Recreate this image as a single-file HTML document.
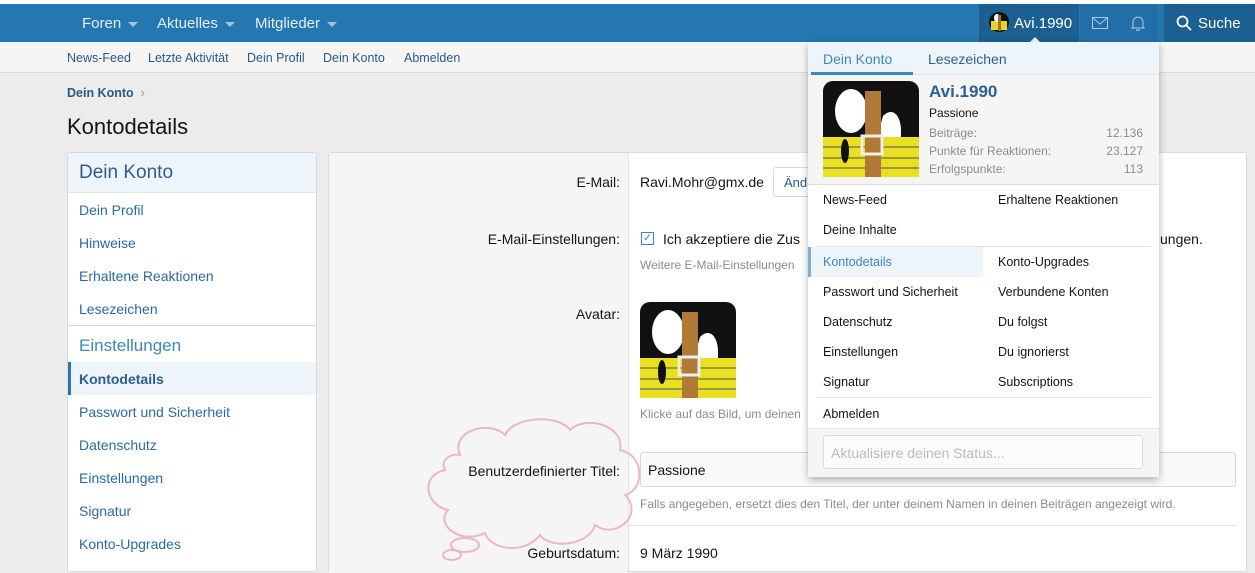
<!DOCTYPE html>
<html><head><meta charset="utf-8">
<style>
*{box-sizing:border-box;margin:0;padding:0}
body{width:1255px;height:561px;overflow:hidden;background:#ececec;font-family:"Liberation Sans","DejaVu Sans",sans-serif;position:relative;color:#141414}
.abs{position:absolute}
.top{left:0;top:4px;width:1255px;height:38px;background:#2577b1}
.topw{left:0;top:0;width:1255px;height:4px;background:#fff}
.nav{color:#e4effa;font-size:15px;top:15px}
.car{display:inline-block;width:0;height:0;border-left:5px solid transparent;border-right:5px solid transparent;border-top:5px solid #9cc3e6;margin-left:7px;vertical-align:middle}
.sub{left:0;top:42px;width:1255px;height:31px;background:#f5f5f5;border-bottom:1px solid #d8d8d8}
.sub span{position:absolute;top:9px;font-size:12.5px;color:#2a5a88}
.side{left:67px;top:152px;width:250px;height:420px;background:#fff;border:1px solid #dadada;border-radius:3px}
.side div{position:absolute;left:11px;font-size:14px;color:#2b6aa0}
.main{left:328px;top:152px;width:919px;height:420px;background:#fff;border:1px solid #dadada;border-radius:3px}
.lab{background:#f5f5f5}
.lbl{font-size:14px;color:#141414;text-align:right;width:300px;left:320px}
.hint{font-size:12px;color:#8c8c8c}
.dd{left:808px;top:42px;width:351px;height:435px;background:#fff;box-shadow:0 3px 8px rgba(0,0,0,.3);border-radius:0 0 3px 3px}
.mi{position:absolute;font-size:12.5px;color:#141414}
</style></head><body>
<div class="abs topw"></div>
<div class="abs top"></div>
<div class="abs nav" style="left:82px">Foren<span class="car"></span></div>
<div class="abs nav" style="left:157px">Aktuelles<span class="car"></span></div>
<div class="abs nav" style="left:255px">Mitglieder<span class="car"></span></div>
<div class="abs" style="left:979px;top:4px;width:100px;height:38px;background:#1c5f91"></div>
<div class="abs" style="left:1080px;top:4px;width:78px;height:38px;background:#226ea6"></div>
<div class="abs" style="left:1164px;top:4px;width:91px;height:38px;background:#1c5f91"></div>
<svg class="abs" style="left:989px;top:12px" width="20" height="20" viewBox="0 0 20 20"><circle cx="10" cy="10" r="10" fill="#111"/><rect x="2" y="9" width="16" height="9" fill="#e8d626"/><ellipse cx="8" cy="6" rx="3" ry="4" fill="#fff"/><rect x="9" y="3" width="3" height="16" fill="#a6702e"/></svg>
<div class="abs nav" style="left:1014px;color:#fff">Avi.1990</div>
<svg class="abs" style="left:1092px;top:17px" width="16" height="12" viewBox="0 0 16 12"><rect x="0.5" y="0.5" width="15" height="11" fill="none" stroke="#a9cbe8"/><path d="M1 1l7 6 7-6" fill="none" stroke="#a9cbe8"/></svg>
<svg class="abs" style="left:1131px;top:15px" width="14" height="16" viewBox="0 0 14 16"><path d="M2 12V7a5 5 0 0110 0v5l1 1H1z M5.5 14a1.5 1.5 0 003 0" fill="none" stroke="#a9cbe8"/></svg>
<svg class="abs" style="left:1176px;top:15px" width="16" height="16" viewBox="0 0 16 16"><circle cx="6.5" cy="6.5" r="5" fill="none" stroke="#fff" stroke-width="1.8"/><path d="M10 10l5 5" stroke="#fff" stroke-width="1.8"/></svg>
<div class="abs nav" style="left:1198px;color:#fff">Suche</div>
<div class="abs" style="left:1030px;top:37px;width:0;height:0;border-left:5px solid transparent;border-right:5px solid transparent;border-bottom:5px solid #edf4fa"></div>

<div class="abs sub"><span style="left:67px">News-Feed</span><span style="left:148px">Letzte Aktivität</span><span style="left:247px">Dein Profil</span><span style="left:323px">Dein Konto</span><span style="left:404px">Abmelden</span></div>
<div class="abs" style="left:67px;top:86px;font-size:12.5px;font-weight:bold;color:#2a5a88">Dein Konto <span style="color:#999;font-weight:normal">&nbsp;›</span></div>
<div class="abs" style="left:67px;top:114px;font-size:22px;color:#141414">Kontodetails</div>

<div class="abs side">
<div style="left:0;top:0;width:248px;height:40px;background:#edf4fa;border-bottom:1px solid #dde5ec"></div>
<div style="top:9px;font-size:19px;color:#2f5f8d">Dein Konto</div>
<div style="top:49px">Dein Profil</div>
<div style="top:82px">Hinweise</div>
<div style="top:115px">Erhaltene Reaktionen</div>
<div style="top:148px">Lesezeichen</div>
<div style="left:0;top:172px;width:248px;height:1px;background:#dadada"></div>
<div style="top:183px;font-size:17px;color:#3a8ab8">Einstellungen</div>
<div style="left:0;top:209px;width:248px;height:33px;background:#edf4fa;border-left:3px solid #2577b1"></div>
<div style="top:218px;font-weight:bold;color:#2f5f8d">Kontodetails</div>
<div style="top:251px">Passwort und Sicherheit</div>
<div style="top:284px">Datenschutz</div>
<div style="top:317px">Einstellungen</div>
<div style="top:350px">Signatur</div>
<div style="top:383px">Konto-Upgrades</div>
</div>

<div class="abs main"><div class="abs lab" style="left:0;top:0;width:300px;height:420px;border-right:1px solid #e3e3e3"></div></div>
<div class="abs lbl" style="top:174px">E-Mail:</div>
<div class="abs" style="left:640px;top:174px;font-size:14px">Ravi.Mohr@gmx.de</div>
<div class="abs" style="left:773px;top:167px;width:50px;height:30px;border:1px solid #d8d8d8;border-radius:3px;font-size:13px;color:#2a5a88;padding:7px 10px">Änd</div>
<div class="abs lbl" style="top:231px">E-Mail-Einstellungen:</div>
<div class="abs" style="left:641px;top:232px;width:13px;height:13px;border:1px solid #3a8ab8;color:#3a8ab8;font-size:11px;line-height:11px;text-align:center">✓</div>
<div class="abs" style="left:663px;top:231px;font-size:14px">Ich akzeptiere die Zus</div>
<div class="abs" style="left:1160px;top:231px;font-size:14px">ungen.</div>
<div class="abs hint" style="left:640px;top:258px">Weitere E-Mail-Einstellungen</div>
<div class="abs lbl" style="top:306px">Avatar:</div>
<svg class="abs" style="left:640px;top:302px" width="96" height="96" viewBox="0 0 96 96"><rect width="96" height="96" rx="10" fill="#111"/><path d="M0 56h96v40H0z" fill="#e8e020"/><path d="M0 66h96M0 77h96M0 87h96" stroke="#555" stroke-width="1"/><ellipse cx="28" cy="30" rx="16" ry="22" fill="#fff"/><path d="M60 35c10-10 18 0 18 15v6H54z" fill="#fff"/><rect x="42" y="10" width="16" height="86" fill="#b07a36"/><rect x="39" y="55" width="20" height="18" fill="none" stroke="#eee" stroke-width="3"/><ellipse cx="22" cy="70" rx="4" ry="12" fill="#111"/></svg>
<div class="abs hint" style="left:640px;top:407px">Klicke auf das Bild, um deinen</div>
<div class="abs lbl" style="top:463px">Benutzerdefinierter Titel:</div>
<div class="abs" style="left:640px;top:452px;width:596px;height:35px;background:#f7f9fb;border:1px solid #d8d8d8;border-radius:3px;font-size:14px;padding:9px 7px">Passione</div>
<div class="abs hint" style="left:640px;top:497px">Falls angegeben, ersetzt dies den Titel, der unter deinem Namen in deinen Beiträgen angezeigt wird.</div>
<div class="abs" style="left:629px;top:525px;width:608px;height:1px;background:#e3e3e3"></div>
<div class="abs lbl" style="top:545px">Geburtsdatum:</div>
<div class="abs" style="left:640px;top:545px;font-size:14px">9 März 1990</div>

<svg class="abs" style="left:420px;top:415px" width="230" height="146" viewBox="0 0 230 146"><g fill="none" stroke="#eab6c8" stroke-width="2"><path d="M40 40C30 15 70 5 85 20C95 0 140 0 150 15C165 0 205 10 200 35C225 40 225 75 205 80C225 100 195 125 175 110C170 130 130 135 120 120C105 140 70 135 65 118C40 130 15 110 28 95C5 90 0 60 25 55C20 45 30 38 40 40Z"/><ellipse cx="45" cy="130" rx="14" ry="7"/><ellipse cx="32" cy="140" rx="9" ry="5"/></g></svg>

<div class="abs dd">
<div class="abs" style="left:0;top:0;width:351px;height:33px;background:#edf4fa;border-bottom:1px solid #dde5ec"></div>
<div class="abs" style="left:15px;top:9px;font-size:14px;color:#3a8ab8">Dein Konto</div>
<div class="abs" style="left:3px;top:30px;width:102px;height:3px;background:#3a8ab8"></div>
<div class="abs" style="left:120px;top:9px;font-size:14px;color:#2f5f8d">Lesezeichen</div>
<div class="abs" style="left:0;top:33px;width:351px;height:110px;background:#f5f5f5;border-bottom:1px solid #dadada"></div>
<svg class="abs" style="left:15px;top:39px" width="96" height="96" viewBox="0 0 96 96"><rect width="96" height="96" rx="10" fill="#111"/><path d="M0 56h96v40H0z" fill="#e8e020"/><path d="M0 66h96M0 77h96M0 87h96" stroke="#555" stroke-width="1"/><ellipse cx="28" cy="30" rx="16" ry="22" fill="#fff"/><path d="M60 35c10-10 18 0 18 15v6H54z" fill="#fff"/><rect x="42" y="10" width="16" height="86" fill="#b07a36"/><rect x="39" y="55" width="20" height="18" fill="none" stroke="#eee" stroke-width="3"/><ellipse cx="22" cy="70" rx="4" ry="12" fill="#111"/></svg>
<div class="abs" style="left:121px;top:40px;font-size:17px;font-weight:bold;color:#2f5f8d">Avi.1990</div>
<div class="abs" style="left:121px;top:64px;font-size:12px">Passione</div>
<div class="abs" style="left:121px;top:82px;font-size:12px;color:#8c8c8c;width:214px;line-height:18px">Beiträge:<span style="float:right">12.136</span><br>Punkte für Reaktionen:<span style="float:right">23.127</span><br>Erfolgspunkte:<span style="float:right">113</span></div>
<div class="mi" style="left:15px;top:151px">News-Feed</div><div class="mi" style="left:190px;top:151px">Erhaltene Reaktionen</div>
<div class="mi" style="left:15px;top:181px">Deine Inhalte</div>
<div class="abs" style="left:8px;top:204px;width:335px;height:1px;background:#e3e3e3"></div>
<div class="abs" style="left:0;top:205px;width:175px;height:30px;background:#edf4fa;border-left:3px solid #7fb0d6"></div>
<div class="mi" style="left:15px;top:213px;color:#3a8ab8">Kontodetails</div><div class="mi" style="left:190px;top:213px">Konto-Upgrades</div>
<div class="mi" style="left:15px;top:243px">Passwort und Sicherheit</div><div class="mi" style="left:190px;top:243px">Verbundene Konten</div>
<div class="mi" style="left:15px;top:273px">Datenschutz</div><div class="mi" style="left:190px;top:273px">Du folgst</div>
<div class="mi" style="left:15px;top:303px">Einstellungen</div><div class="mi" style="left:190px;top:303px">Du ignorierst</div>
<div class="mi" style="left:15px;top:333px">Signatur</div><div class="mi" style="left:190px;top:333px">Subscriptions</div>
<div class="abs" style="left:8px;top:355px;width:335px;height:1px;background:#e3e3e3"></div>
<div class="mi" style="left:15px;top:365px">Abmelden</div>
<div class="abs" style="left:0;top:386px;width:351px;height:49px;background:#f5f5f5;border-top:1px solid #e3e3e3"></div>
<div class="abs" style="left:15px;top:393px;width:320px;height:34px;background:#fafbfc;border:1px solid #dadada;border-radius:3px;font-size:14px;color:#bbb;padding:9px 7px">Aktualisiere deinen Status...</div>
</div>
</body></html>
